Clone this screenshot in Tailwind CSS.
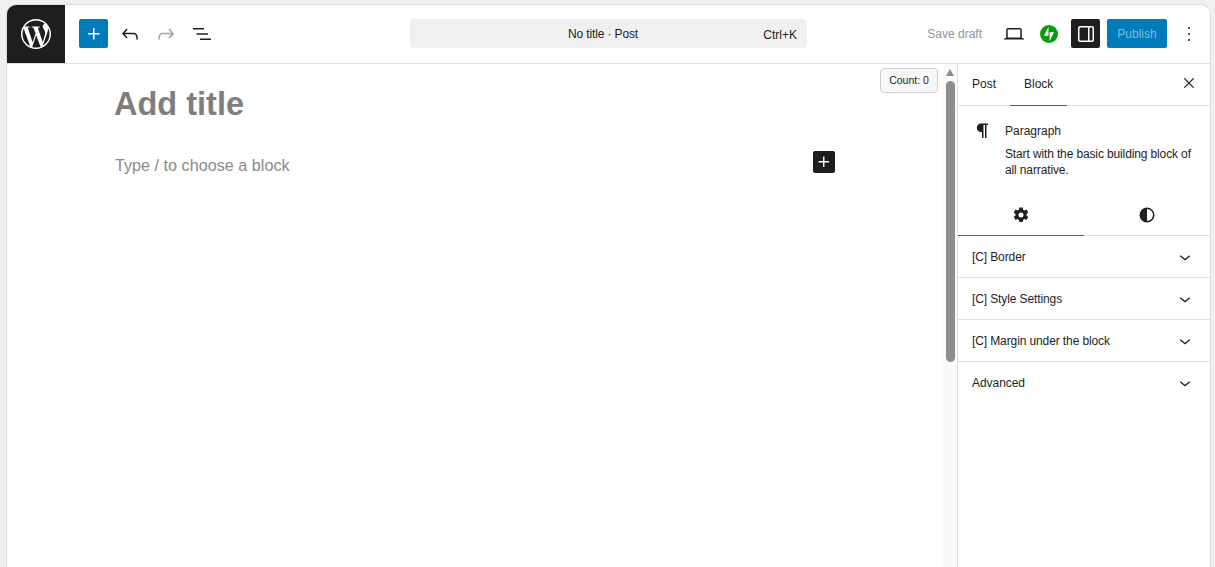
<!DOCTYPE html>
<html><head><meta charset="utf-8"><script src="https://cdn.jsdelivr.net/npm/@tailwindcss/browser@4"></script></head>
<body class="bg-[#f0f0f0] overflow-hidden font-['Liberation_Sans',Arial,sans-serif] text-[#1e1e1e]">
<div class="w-[1215px] h-[567px] pl-[6px] pr-[4px] pt-[4px]">
<div class="h-[563px] flex flex-col bg-white border border-[#dcdcdc] border-b-0 rounded-t-[10px] overflow-hidden">
  <header class="h-[59px] shrink-0 flex items-center border-b border-[#e0e0e0] pb-[1px]">
    <div class="w-[58px] h-[58px] self-start bg-[#1e1e1e] flex items-center justify-center shrink-0">
      <svg width="36" height="36" viewBox="0 0 24 24" fill="#fff"><path d="M12 2C6.500 2 2 6.500 2 12s4.500 10 10 10 10-4.500 10-10S17.500 2 12 2zM3.010 12c0-1.300.28-2.540.78-3.660l4.290 11.750A8.990 8.990 0 0 1 3.010 12zM12 20.990c-.88 0-1.730-.13-2.540-.37l2.700-7.840 2.760 7.570c.02.040.4.090.6.120-.93.330-1.930.52-2.980.52zm1.240-13.210c.54-.03 1.030-.09 1.030-.09.480-.06.430-.770-.06-.740 0 0-1.460.11-2.400.11-.88 0-2.370-.11-2.370-.11-.48-.03-.54.710-.06.740 0 0 .46.060.94.090l1.400 3.830-1.960 5.890-3.270-9.720c.54-.03 1.030-.09 1.030-.09.480-.06.430-.770-.06-.740 0 0-1.460.11-2.400.11-.17 0-.37 0-.58-.01A8.980 8.980 0 0 1 12 3.010c2.340 0 4.480.9 6.080 2.360h-.12c-.88 0-1.510.77-1.510 1.600 0 .74.43 1.370.88 2.110.34.600.74 1.370.74 2.480 0 .77-.3 1.660-.68 2.910l-.9 3zm3.290 12.020 2.750-7.950c.51-1.280.68-2.310.68-3.220 0-.33-.02-.640-.06-.92A8.970 8.970 0 0 1 20.990 12a8.980 8.980 0 0 1-4.460 7.800z"/></svg>
    </div>
    <div class="flex items-center pl-[14px] gap-[8px]">
      <div class="w-[29px] h-[29px] rounded-[2px] bg-[#007cba] flex items-center justify-center">
        <svg width="24" height="24" viewBox="0 0 24 24" fill="#fff"><path d="M11 12.500V17.500H12.500V12.500H17.500V11H12.500V6H11V11H6V12.500H11Z"/></svg>
      </div>
      <div class="w-[28px] h-[32px] flex items-center justify-center">
        <svg width="24" height="24" viewBox="0 0 24 24" fill="#1e1e1e"><path d="M18.300 11.700c-.6-.6-1.400-.9-2.300-.9H6.700l2.900-3.300-1.100-1-4.500 5L8.500 16.500l1-1-2.700-3.200H16c.5 0 .9.200 1.300.5 1 1 1 3.400 1 4.500v.3h1.500v-.2c0-1.500 0-4.300-1.500-5.700z"/></svg>
      </div>
      <div class="w-[28px] h-[32px] flex items-center justify-center">
        <svg width="24" height="24" viewBox="0 0 24 24" fill="#a3a3a3"><path d="M15.600 6.500l-1.100 1 2.900 3.300H8c-.9 0-1.700.3-2.300.9-1.400 1.500-1.400 4.200-1.400 5.700v.2h1.500v-.3c0-1.100 0-3.500 1-4.500.3-.3.700-.5 1.300-.5h9.200L14.500 15.500l1.100 1.100 4.600-4.600-4.600-5.500z"/></svg>
      </div>
      <div class="w-[28px] h-[32px] flex items-center justify-center">
        <svg width="24" height="24" viewBox="0 0 24 24" fill="#1e1e1e"><path d="M3 6h11v1.500H3V6zm3.500 5.250H18v1.500H6.500v-1.500zM10 16.500h11V18H10v-1.500z"/></svg>
      </div>
    </div>
    <div class="ml-[194px] w-[397px] h-[29px] rounded-[4px] bg-[#f0f0f0] relative flex items-center justify-center text-[12px] text-[#1e1e1e]">
      <span class="mr-[11px] tracking-[-0.13px]">No title · Post</span>
      <span class="absolute right-[10px] top-[7px]">Ctrl+K</span>
    </div>
    <div class="ml-auto flex items-center h-full">
      <span class="text-[12px] text-[#949494] mr-[20px]">Save draft</span>
      <div class="w-[24px] h-[24px] flex items-center justify-center mr-[14px]">
        <svg width="24" height="24" viewBox="0 0 24 24" fill="#1e1e1e"><path d="M20.500 16h-.7V8c0-1.100-.9-2-2-2H6.200c-1.100 0-2 .9-2 2v8h-.7c-.8 0-1.500.7-1.500 1.500h20c0-.8-.7-1.500-1.500-1.500zM5.700 8c0-.3.2-.5.5-.5h11.600c.3 0 .5.200.5.500v7.600H5.700V8z"/></svg>
      </div>
      <svg class="mr-[13px]" width="18" height="18" viewBox="0 0 32 32"><circle cx="16" cy="16" r="16" fill="#069e08"/><path fill="#fff" d="M15 19H7l8-16v16zM17 29V13h8l-8 16z"/></svg>
      <div class="w-[29px] h-[29px] rounded-[2px] bg-[#1e1e1e] flex items-center justify-center mr-[7px]">
        <svg width="24" height="24" viewBox="0 0 24 24" fill="#fff"><path d="M18 4H6c-1.100 0-2 .9-2 2v12c0 1.100.9 2 2 2h12c1.100 0 2-.9 2-2V6c0-1.100-.9-2-2-2zM5.500 18V6c0-.3.2-.5.5-.5h8v13H6c-.3 0-.5-.2-.5-.5zm13 0c0 .3-.2.5-.5.5h-2.500v-13H18c.3 0 .5.200.5.500v12z"/></svg>
      </div>
      <div class="w-[60px] h-[29px] rounded-[2px] bg-[#007cba] text-[#7fbbdc] text-[12px] flex items-center justify-center mr-[10px]">Publish</div>
      <div class="w-[24px] h-[24px] flex items-center justify-center mr-[9px]">
        <svg width="24" height="24" viewBox="0 0 24 24" fill="#1e1e1e"><path d="M13 19h-2v-2h2v2zm0-6h-2v-2h2v2zm0-6h-2V5h2v2z" transform="translate(12 12) scale(.75 1) translate(-12 -12)"/></svg>
      </div>
    </div>
  </header>
  <div class="flex-1 flex min-h-0">
    <main class="flex-1 relative min-w-0">
      <h1 class="absolute left-[107px] top-[20px] text-[32.500px] leading-[40px] font-bold text-[#7e7e7e]">Add title</h1>
      <p class="absolute left-[108px] top-[90px] text-[16.200px] leading-[22px] text-[#8a8a8a]">Type / to choose a block</p>
      <div class="absolute left-[806px] top-[87px] w-[22px] h-[22px] rounded-[2px] bg-[#1e1e1e] flex items-center justify-center">
        <svg width="22" height="22" viewBox="0 0 24 24" fill="#fff"><path d="M11 12.500V17.500H12.500V12.500H17.500V11H12.500V6H11V11H6V12.500H11Z"/></svg>
      </div>
      <div class="absolute left-[873px] top-[4px] w-[58px] h-[25px] rounded-[4px] border border-[#d0d0d0] bg-[#f7f7f7] text-[10.500px] flex items-center justify-center text-[#1e1e1e]">Count: 0</div>
      <div class="absolute right-0 top-0 bottom-0 w-[14px] bg-[#fafafa] flex flex-col items-center">
        <div class="mt-[5px] w-0 h-0 border-l-[4.500px] border-r-[4.500px] border-b-[7px] border-l-transparent border-r-transparent border-b-[#8e8e8e]"></div>
        <div class="mt-[5px] w-[9px] h-[281px] rounded-[5px] bg-[#8e8e8e]"></div>
      </div>
    </main>
    <aside class="w-[253px] shrink-0 border-l border-[#e0e0e0] flex flex-col text-[12px]">
      <div class="h-[42px] shrink-0 border-b border-[#e0e0e0] flex items-center relative">
        <span class="ml-[14px] -mt-[2px]">Post</span>
        <span class="ml-[28px] -mt-[2px]">Block</span>
        <div class="absolute left-[52px] -bottom-[1px] w-[57px] h-[1px] bg-[#007cba]"></div>
        <svg class="absolute right-[9px] top-[7px]" width="24" height="24" viewBox="0 0 24 24" fill="#1e1e1e"><path d="M12.700 12l4.300-4.300-.7-.7L12 11.300 7.700 7l-.7.700 4.300 4.300L7 16.300l.7.700 4.300-4.300 4.300 4.300.7-.7z" stroke="#1e1e1e" stroke-width=".2"/></svg>
      </div>
      <div class="h-[88px] shrink-0 flex pl-[14px] pr-[12px] pt-[15px] relative">
        <svg class="shrink-0 mr-[9px]" width="24" height="24" viewBox="0 0 24 24" fill="#1e1e1e"><path d="M18 5.500H11a4.200 4.200 0 0 0 0 8.400h1v6.100h1.500V7H15v13h1.500V7H18V5.500z" transform="translate(-2 -3)"/></svg>
        <div class="w-[194px]">
          <div class="leading-[18px] mt-[1px]">Paragraph</div>
          <div class="leading-[16px] mt-[6px] tracking-[-0.13px]">Start with the basic building block of all narrative.</div>
        </div>
      </div>
      <div class="h-[42px] shrink-0 flex border-b border-[#e0e0e0] relative">
        <div class="w-[126px] flex items-center justify-center border-b border-[#007cba] -mb-[1px]">
          <svg width="24" height="24" viewBox="0 0 24 24" fill="#1e1e1e"><path fill-rule="evenodd" d="M10.300 4.500h3.400l.4 2.200c.5.200.9.400 1.300.700l2.100-.8 1.700 3-1.700 1.400a5.600 5.600 0 0 1 0 1.500l1.700 1.400-1.700 3-2.100-.8c-.4.300-.8.500-1.300.7l-.4 2.200h-3.400l-.4-2.200c-.5-.2-.9-.4-1.300-.7l-2.100.8-1.700-3 1.700-1.400a5.600 5.600 0 0 1 0-1.500L4.800 9.600l1.700-3 2.100.8c.4-.3.8-.5 1.300-.7zM12 9.500a2.500 2.500 0 1 0 0 5 2.500 2.500 0 0 0 0-5z"/></svg>
        </div>
        <div class="flex-1 flex items-center justify-center">
          <svg width="24" height="24" viewBox="0 0 24 24" fill="#1e1e1e"><path fill-rule="evenodd" d="M12 4.500a7.500 7.500 0 1 1 0 15 7.500 7.500 0 0 1 0-15zm0 1.500v12a6 6 0 0 0 0-12z"/></svg>
        </div>
      </div>
      <div class="h-[42px] shrink-0 border-b border-[#e0e0e0] flex items-center justify-between pl-[14px] pr-[13px]"><span class="tracking-[-0.11px]">[C] Border</span><svg width="24" height="24" viewBox="0 0 24 24" fill="#1e1e1e"><path d="M17.200 11.300L12 15.500l-5.200-4.200.8-1L12 13.800l4.400-3.500.8 1z"/></svg></div>
      <div class="h-[42px] shrink-0 border-b border-[#e0e0e0] flex items-center justify-between pl-[14px] pr-[13px]"><span class="tracking-[-0.11px]">[C] Style Settings</span><svg width="24" height="24" viewBox="0 0 24 24" fill="#1e1e1e"><path d="M17.200 11.300L12 15.500l-5.200-4.200.8-1L12 13.800l4.400-3.500.8 1z"/></svg></div>
      <div class="h-[42px] shrink-0 border-b border-[#e0e0e0] flex items-center justify-between pl-[14px] pr-[13px]"><span class="tracking-[-0.11px]">[C] Margin under the block</span><svg width="24" height="24" viewBox="0 0 24 24" fill="#1e1e1e"><path d="M17.200 11.300L12 15.500l-5.200-4.200.8-1L12 13.800l4.400-3.500.8 1z"/></svg></div>
      <div class="h-[42px] shrink-0 flex items-center justify-between pl-[14px] pr-[13px]"><span class="-mt-[1px] tracking-[-0.05px]">Advanced</span><svg width="24" height="24" viewBox="0 0 24 24" fill="#1e1e1e"><path d="M17.200 11.300L12 15.500l-5.200-4.200.8-1L12 13.800l4.400-3.500.8 1z"/></svg></div>
    </aside>
  </div>
</div>
</div>
</body></html>
